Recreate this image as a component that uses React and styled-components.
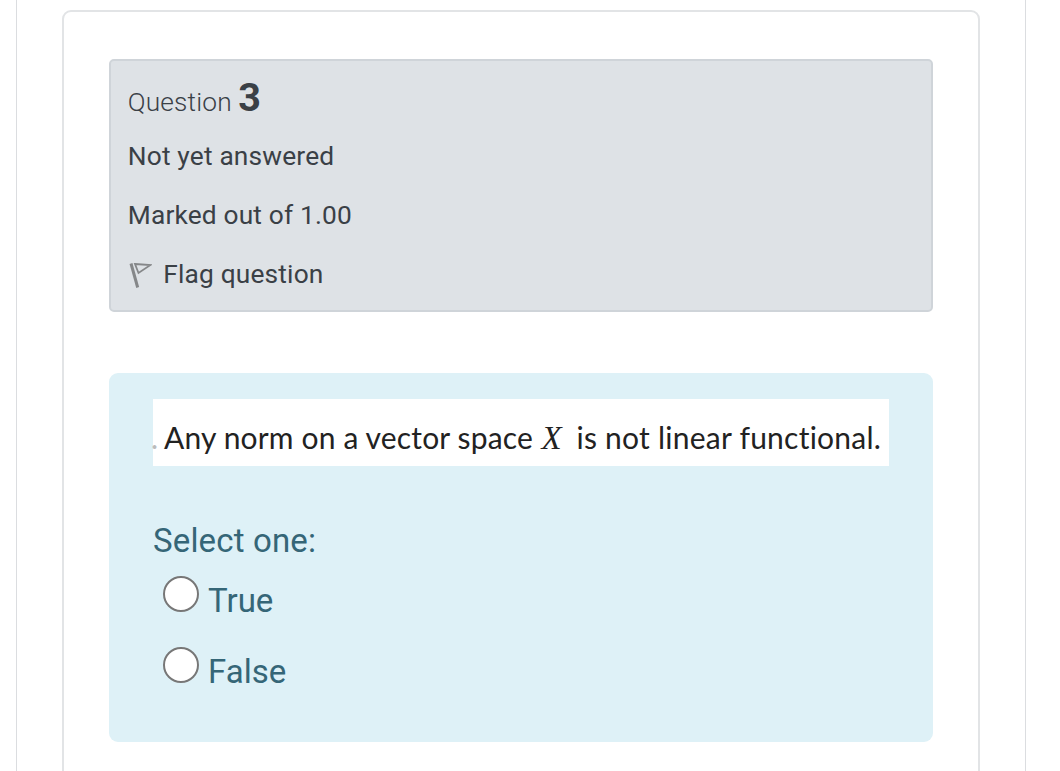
import React from "react";
import styled, { createGlobalStyle } from "styled-components"


const GlobalStyle = createGlobalStyle`
  * {
    box-sizing: border-box;
  }

  body {
    margin: 0;
    background-color: #fff;
    font-family: Roboto, sans-serif;
    overflow: hidden;
  }
`

const Page = styled.main`
  height: 771px;
  width: 1010px;
  margin-left: 16px;
  padding: 10px 45px 0 45px;
  border: solid #dbdde0;
  border-width: 0 1px;
`

const Card = styled.section`
  height: 780px;
  padding: 47px 44px 0 44.5px;
  border: 2px solid #e2e4e6;
  border-radius: 9px;
`

const InfoBox = styled.div`
  height: 253px;
  width: 824px;
  padding: 17px 17.3px 0;
  background-color: #dee2e6;
  border: 2px solid #cfd4d9;
  border-radius: 5px;
  color: #3a4046;
`

const QuestionTitle = styled.h3`
  display: flex;
  align-items: baseline;
  gap: 6.5px;
  height: 58px;
  margin: 0;
  line-height: 39px;
  font-size: 26.3px;
  font-weight: 300;
  letter-spacing: 0.15px;
`

const QuestionNumber = styled.span`
  font-size: 39.5px;
  font-weight: 700;
`

const InfoLine = styled.div`
  display: flex;
  align-items: center;
  height: 39px;
  margin-bottom: 20px;
  font-size: 26.3px;
  letter-spacing: 0.17px;
  white-space: nowrap;
`

const FlagIcon = styled.svg`
  width: 24px;
  height: 30px;
  margin: 1px 11.5px 0 0;
`

const Formulation = styled.div`
  height: 369px;
  width: 824px;
  margin-top: 61px;
  padding: 26px 43px 0 44.5px;
  background-color: #def1f7;
  border-radius: 9px;
  color: #356677;
`

const Statement = styled.div`
  display: flex;
  align-items: baseline;
  width: 736px;
  height: 67px;
  padding-top: 18px;
  background-color: #fff;
  color: #222;
  font-family: Lato, sans-serif;
  font-size: 30px;
  line-height: 40px;
  white-space: pre;
`

const StatementText = styled.span`
  width: ${(props) => props.$width};
  letter-spacing: ${(props) => props.$spacing};
`

const FaintDot = styled.span`
  width: 11px;
  color: #bbb;
  text-indent: -2px;
`

const Variable = styled.i`
  width: 35px;
  font-family: "Liberation Serif", serif;
  font-size: 33px;
`

const Prompt = styled.div`
  height: 40px;
  margin-top: 55px;
  font-size: 33px;
  line-height: 40px;
  letter-spacing: 0.15px;
`

const Answer = styled.label`
  display: flex;
  align-items: flex-start;
  height: 40px;
  margin: 20px 0 0 10px;
  font-size: 33px;
  line-height: 40px;

  & + & {
    margin-top: 31px;
  }
`

const Radio = styled.input`
  appearance: none;
  width: 36px;
  height: 36px;
  margin: -5px 9px 0 0;
  background-color: #fff;
  border: 2px solid #777;
  border-radius: 50%;
`

class App extends React.Component {
  render() {
    return (
      <Page>
        <GlobalStyle />
        <Card>
          <InfoBox>
            <QuestionTitle>
              <span>Question</span>
              <QuestionNumber>3</QuestionNumber>
            </QuestionTitle>
            <InfoLine>Not yet answered</InfoLine>
            <InfoLine>Marked out of 1.00</InfoLine>
            <InfoLine>
              <FlagIcon viewBox="0 0 24 30" fill="none" stroke="#858789">
                <path d="M3 4.5L9.7 28.5" strokeWidth="3" />
                <path d="M7 5L22.5 6L10.5 14Z" strokeWidth="1.8" />
              </FlagIcon>
              Flag question
            </InfoLine>
          </InfoBox>

          <Formulation>
            <Statement>
              <FaintDot>.</FaintDot>
              <StatementText $width="377.5px" $spacing="0.16px">Any norm on a vector space</StatementText>
              <Variable>X</Variable>
              <StatementText $spacing="0.24px">is not linear functional.</StatementText>
            </Statement>
            <Prompt>Select one:</Prompt>
            <Answer>
              <Radio type="radio" name="answer" />
              True
            </Answer>
            <Answer>
              <Radio type="radio" name="answer" />
              False
            </Answer>
          </Formulation>
        </Card>
      </Page>
    );
  }
}

export default App;
